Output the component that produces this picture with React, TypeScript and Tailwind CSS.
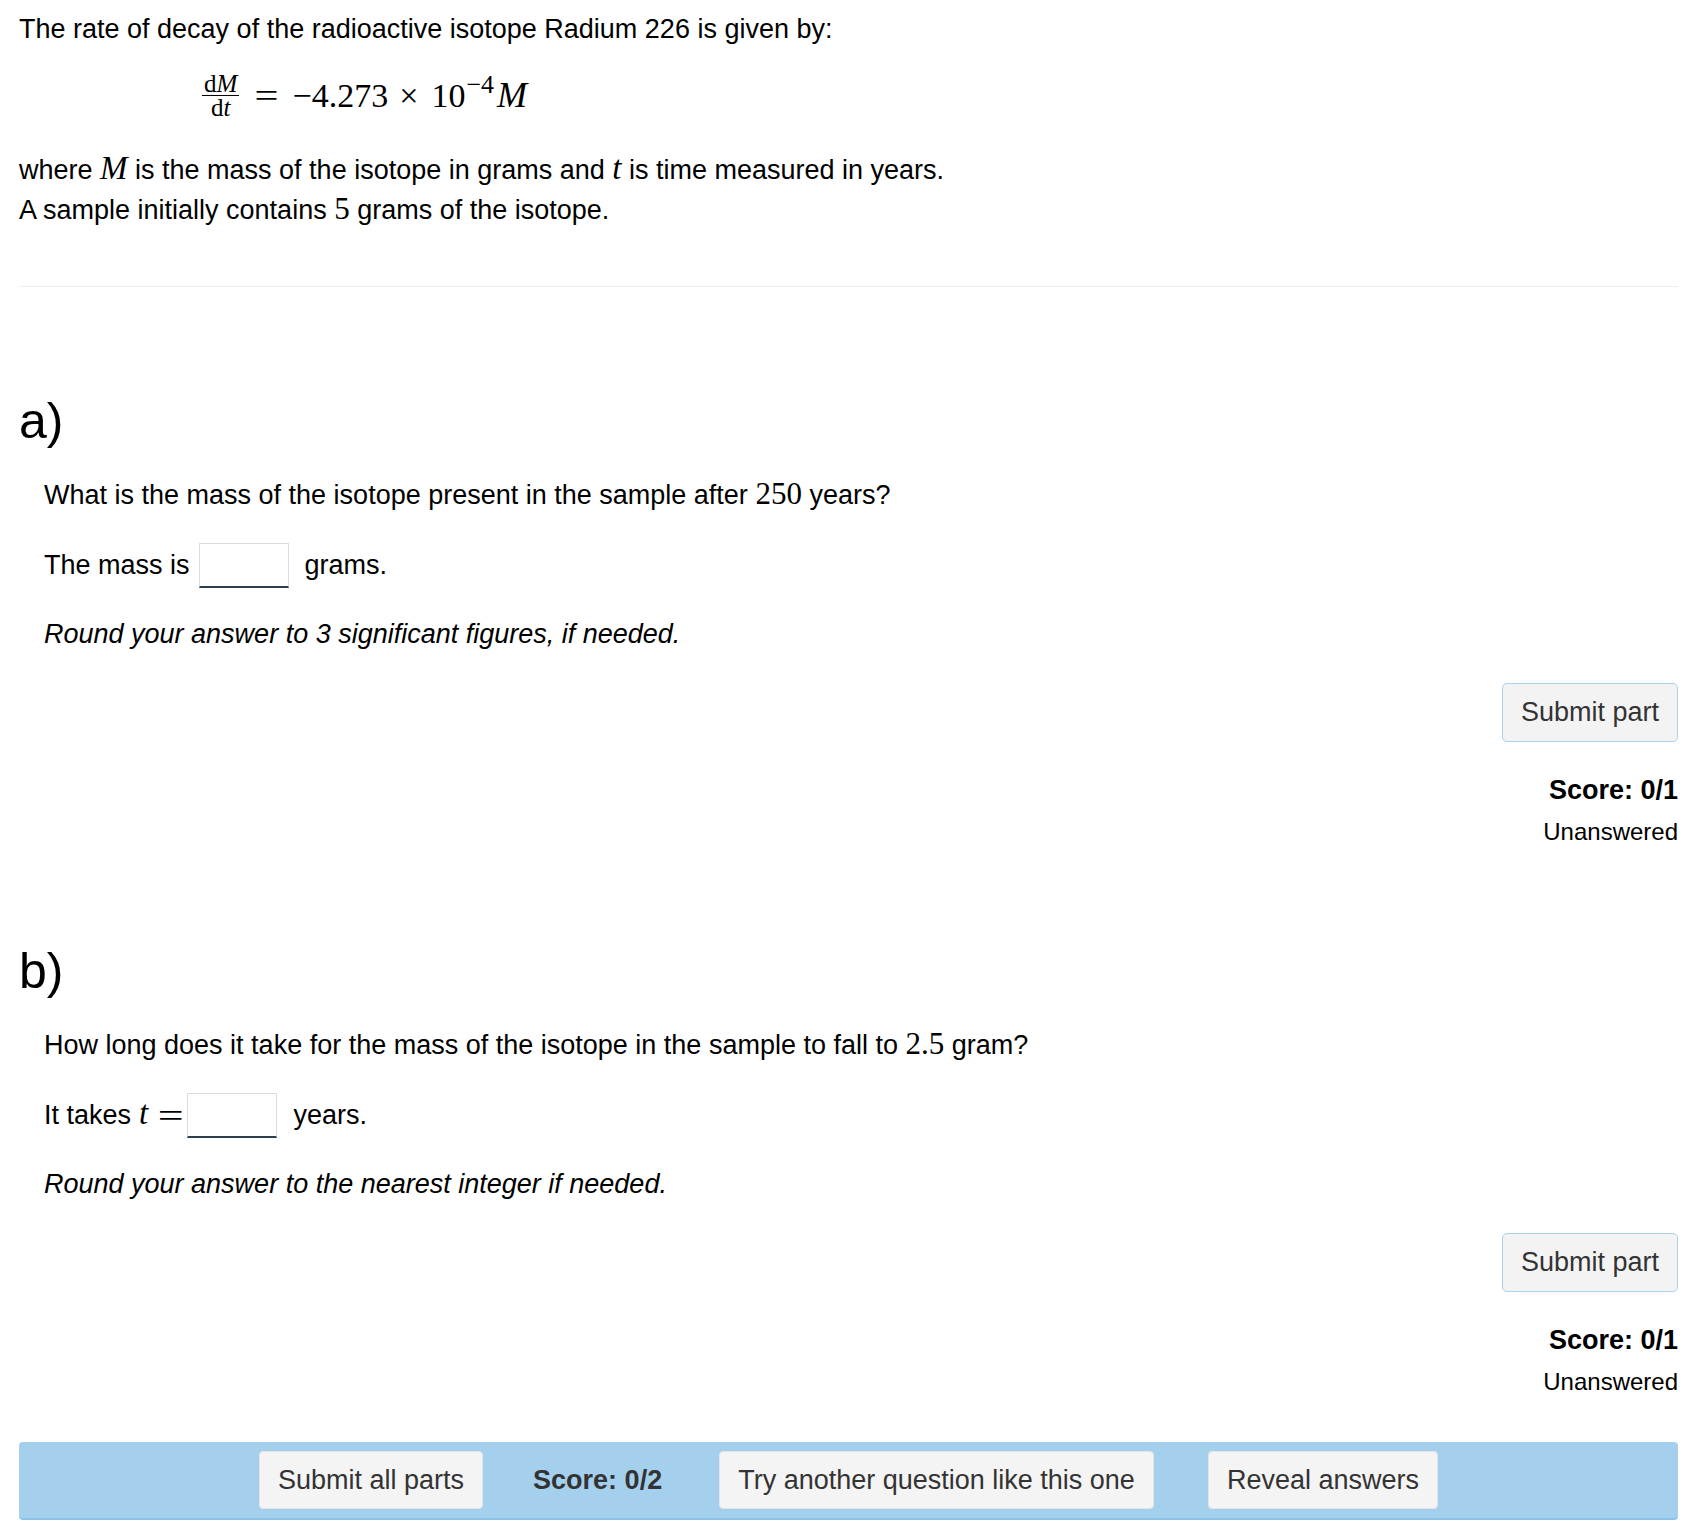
import React from 'react'

const sans = "font-['Liberation_Sans',Arial,sans-serif]"
const serif = "font-['Liberation_Serif','Times_New_Roman',serif]"

function MathVar({ children }: { children: React.ReactNode }) {
  return <span className={`${serif} italic text-[33px] leading-[20px]`}>{children}</span>
}

function MathNum({ children }: { children: React.ReactNode }) {
  return <span className={`${serif} text-[31px] leading-[20px]`}>{children}</span>
}

function AnswerBox() {
  return (
    <input
      type="text"
      className="w-[90px] h-[45px] bg-white border border-[#dcdcdc] border-b-2 border-b-[#2c3e50] outline-none"
    />
  )
}

interface PartProps {
  label: string
  prompt: React.ReactNode
  answerRow: React.ReactNode
  hint: string
  topGap: string
}

function Part({ label, prompt, answerRow, hint, topGap }: PartProps) {
  return (
    <section className={topGap}>
      <h3 className="text-[50px] leading-[50px] text-black">{label}</h3>
      <div className="pl-[25px]">
        <p className="mt-[32px] leading-[34px]">{prompt}</p>
        <div className="mt-[31px] flex items-center h-[45px]">{answerRow}</div>
        <p className="mt-[29px] leading-[34px] italic">{hint}</p>
      </div>
      <div className="flex flex-col items-end">
        <button className="mt-[32px] h-[59px] px-[18px] bg-[#f3f3f3] border border-[#a9d2ef] rounded-[5px] text-[27px] text-[#333]">
          Submit part
        </button>
        <div className="mt-[30px] text-[27px] leading-[36px] font-bold text-black">Score: 0/1</div>
        <div className="mt-[7px] text-[24px] leading-[34px] text-black">Unanswered</div>
      </div>
    </section>
  )
}

export default function App() {
  return (
    <div className={`${sans} text-[27px] text-black bg-white min-h-[1536px] pl-[19px] pr-[14px] pt-[12px]`}>
      {/* Statement */}
      <p className="leading-[34px]">
        The rate of decay of the radioactive isotope Radium 226 is given by:
      </p>

      <div className={`${serif} mt-[14px] h-[70px] pl-[183px] flex items-center`}>
        <span className="inline-flex flex-col items-center text-[25px] leading-[23px] mr-[18px]">
          <span className="px-[2px]">
            d<span className="italic">M</span>
          </span>
          <span className="w-full border-t border-black" />
          <span>
            d<span className="italic">t</span>
          </span>
        </span>
        <span className="text-[34px] leading-[34px] translate-y-[2px] whitespace-nowrap">
          <span className="inline-block scale-x-[1.25] mr-[16px]">=</span>
          <span>−4.273</span>
          <span className="ml-[11px] mr-[13px]">×</span>
          <span>10</span>
          <span className="text-[26px] relative -top-[14px] ml-[1px]">−4</span>
          <span className="italic text-[36px] ml-[3px]">M</span>
        </span>
      </div>

      <p className="mt-[20px] leading-[40px]">
        where <MathVar>M</MathVar> is the mass of the isotope in grams and <MathVar>t</MathVar> is
        time measured in years.
      </p>
      <p className="leading-[40px]">
        A sample initially contains <MathNum>5</MathNum> grams of the isotope.
      </p>

      <hr className="mt-[56px] border-0 border-t border-[#eeeeee]" />

      <Part
        topGap="mt-[109px]"
        label="a)"
        prompt={
          <>
            What is the mass of the isotope present in the sample after <MathNum>250</MathNum> years?
          </>
        }
        answerRow={
          <>
            <span>The mass is</span>
            <span className="ml-[9px]">
              <AnswerBox />
            </span>
            <span className="ml-[16px]">grams.</span>
          </>
        }
        hint="Round your answer to 3 significant figures, if needed."
      />

      <Part
        topGap="mt-[97px]"
        label="b)"
        prompt={
          <>
            How long does it take for the mass of the isotope in the sample to fall to{' '}
            <MathNum>2.5</MathNum> gram?
          </>
        }
        answerRow={
          <>
            <span>It takes</span>
            <span className="ml-[8px]">
              <MathVar>t</MathVar>
            </span>
            <span className={`${serif} inline-block scale-x-[1.35] text-[34px] ml-[13px] mr-[7px]`}>=</span>
            <AnswerBox />
            <span className="ml-[16px]">years.</span>
          </>
        }
        hint="Round your answer to the nearest integer if needed."
      />

      {/* Bottom bar */}
      <div className="mt-[43px] bg-[#a4d0ee] border-b-2 border-[#8cc2e7] rounded-[4px] pt-[9px] pb-[9px] flex justify-center items-center text-[27px] text-[#333]">
        <button className="h-[58px] px-[18px] bg-[#f4f4f4] border border-[#e4e4e4] rounded-[4px]">
          Submit all parts
        </button>
        <span className="ml-[50px] mr-[57px] font-bold">Score: 0/2</span>
        <button className="h-[58px] px-[18px] bg-[#f4f4f4] border border-[#e4e4e4] rounded-[4px]">
          Try another question like this one
        </button>
        <button className="ml-[54px] h-[58px] px-[18px] bg-[#f4f4f4] border border-[#e4e4e4] rounded-[4px]">
          Reveal answers
        </button>
      </div>
    </div>
  )
}
